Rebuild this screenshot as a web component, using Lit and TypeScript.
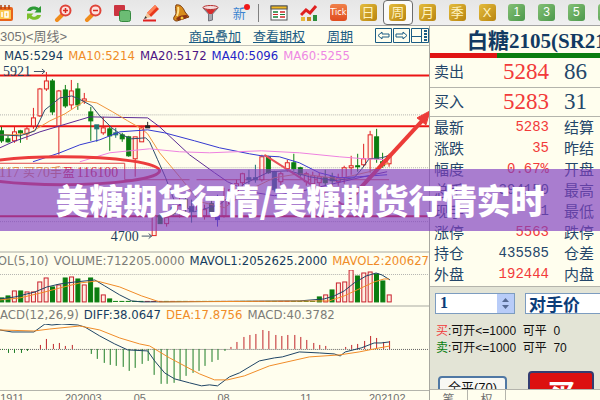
import { LitElement, html, svg, css } from "lit";
import { customElement } from "lit/decorators.js";

const PITCH = 6.37;
const xAt = (i: number) => 1.6 + PITCH * i;
const RED = "#e02020";
const GREEN = "#0a7d10";

type Candle = [number, string, number, number, number, number];

// x, kind, wick top, body top, body bottom, wick bottom
const candles: Candle[] = [
  [1.5, "g", 127, 131, 141, 143], [8, "g", 136, 139, 142, 143], [14.5, "r", 127, 132, 141, 143],
  [20.5, "g", 130, 131, 133, 143], [27, "r", 127, 129, 134, 140], [33.5, "r", 108, 118, 126, 129],
  [40, "r", 88, 89, 116, 117], [46.5, "r", 72, 81, 89, 91], [52.5, "g", 79, 81, 112, 115],
  [59, "r", 90, 91, 126, 155], [65.5, "g", 85, 90, 106, 108], [71.5, "r", 80, 91, 105, 109],
  [78, "g", 83, 89, 105, 110], [84.5, "r", 93, 99, 101, 104], [91, "g", 107, 112, 121, 141],
  [97, "t", 125, 125, 129, 142], [103.5, "r", 117, 128, 133, 135], [110, "g", 127, 129, 136, 151],
  [116, "t", 128, 133, 135, 138], [122.5, "g", 133, 135, 139, 142], [129, "g", 136, 137, 156, 157],
  [135.5, "r", 137, 137, 159, 177], [142, "r", 126, 128, 142, 142], [148, "k", 122, 126, 128, 128],
  [154.5, "r", 198, 216, 236, 236], [160.5, "g", 214, 216, 224, 224], [167, "r", 216, 218, 224, 227],
  [173.5, "g", 205, 208, 214, 216], [180, "r", 198, 206, 214, 218], [186, "g", 196, 200, 208, 214],
  [192, "t", 200, 207, 212, 223], [199, "r", 196, 202, 210, 214], [205, "r", 205, 210, 216, 220],
  [212, "g", 200, 204, 213, 216], [218, "b", 195, 216, 220, 227], [224.5, "r", 188, 200, 216, 218],
  [231, "r", 184, 190, 204, 206], [237, "r", 180, 184, 192, 196], [243, "r", 173, 174, 183, 190],
  [249.5, "t", 170, 178, 180, 186], [256, "t", 165, 178, 180, 183], [262.5, "r", 155, 157, 180, 182],
  [269, "g", 156, 157, 173, 174], [275, "t", 171, 172, 190, 192], [281.5, "r", 172, 174, 182, 187],
  [288, "r", 160, 163, 169, 172], [294.5, "g", 154, 163, 169, 171], [301, "g", 167, 168, 175, 177],
  [307, "r", 172, 174, 182, 186], [313.5, "r", 172, 176, 184, 187], [320, "r", 173, 177, 183, 190],
  [326, "g", 170, 178, 183, 186], [333, "g", 173, 177, 181, 187], [339, "r", 174, 178, 182, 186],
  [345, "r", 166, 168, 178, 184], [352, "r", 156, 166, 168, 175], [358.5, "g", 154, 166, 167, 172],
  [364.5, "r", 144, 159, 165, 167], [371, "r", 131, 135, 159, 173], [377.5, "g", 129, 137, 159, 163],
  [383.5, "g", 153, 162, 166, 168], [390, "r", 154, 156, 164, 167],
];

const fills: Record<string, string> = { g: GREEN, t: "#1f7470", b: "#2b3fc0", k: "#222222" };

const volumes: [number, string][] = [
  [4, "g"], [6, "g"], [11, "r"], [11, "g"], [10, "r"], [10, "r"], [20, "r"], [24, "r"], [15, "g"],
  [17, "r"], [24, "g"], [25, "r"], [23, "g"], [17, "r"], [24, "g"], [14, "g"], [7, "r"], [3, "g"],
  ..."gggggrrrgrggrggggrrrggrrggrrgggg".split("").map((k): [number, string] => [1, k]),
  [5, "g"], [7, "r"], [12, "g"], [19, "r"], [20, "r"], [32, "r"], [26, "g"], [29, "r"], [30, "r"],
  [28, "g"], [21, "g"], [7, "r"],
];

const macd = [
  -1, -4, -4, -4, -2, 0, 4, 10, 5, 6, 3, 4, 0, 0, -5, -10, -14, -16, -17, -18, -22, -19, -15, -12,
  -26, -35, -35, -34, -31, -27, -24, -22, -17, -13, -11, -2, 2, 7, 12, 14, 15, 19, 18, 14, 13, 14,
  14, 12, 9, 6, 4, 3, 0, 0, 2, 4, 5, 8, 13, 11, 7, 8,
];

const line = (points: string, color: string, width = 1) =>
  svg`<polyline points=${points} fill="none" stroke=${color} stroke-width=${width} stroke-linejoin="round"/>`;

const dots = (y: number, color = "#b4b4b0") =>
  svg`<line x1="0" x2="429" y1=${y} y2=${y} stroke=${color} stroke-dasharray="1 1"/>`;

const drawCandle = ([x, k, wt, bt, bb, wb]: Candle) => {
  const c = k === "r" ? RED : fills[k];
  return svg`<path d="M${x} ${wt}V${bt}M${x} ${bb}V${wb}" stroke=${c}/>
    <rect x=${x - 2} y=${bt} width="4" height=${Math.max(bb - bt, 1)} fill=${k === "r" ? "#fff4e4" : c} stroke=${c}/>`;
};

const drawVolume = ([h, k]: [number, string], i: number) => {
  if (h === 1) {
    return svg`<rect x=${xAt(i) - 3} y="301" width="5" height="1" fill=${k === "r" ? RED : GREEN}/>`;
  }
  const c = k === "r" ? "#c8202c" : GREEN;
  return svg`<rect x=${xAt(i) - 2} y=${302 - h} width="4" height=${h} fill=${k === "r" ? "#fff0e4" : c} stroke=${c}/>`;
};

const magnifier = (plus: boolean) => svg`
  <path d="M3 16L8 11" stroke="#f08c1c" stroke-width="4" stroke-linecap="round"/>
  <circle cx="11.500" cy="6.500" r="5" fill="#fbe4e0" stroke="#e04438" stroke-width="2"/>
  <path d=${plus ? "M9 6.500h5M11.500 4v5" : "M9 6.500h5"} stroke="#d8281c" stroke-width="1.500"/>`;

const icons: Record<string, unknown> = {
  calendar: svg`<rect x="1" y="3" width="16" height="14" rx="2" fill="#e8641c"/><rect x="3" y="6" width="12" height="9" fill="#fbc850"/><path d="M5 1v4M9 1v4M13 1v4" stroke="#b04010" stroke-width="1.500"/><path d="M6 8v5M9 8h3v5h-3z" stroke="#fff" fill="none" stroke-width="1.500"/>`,
  refresh: svg`<path d="M2 7C3 2 11 1.500 13.500 4L16 2v6.500h-6.500l2-2C10 5 7 5 6 7z" fill="#2c9a34"/><path d="M16 11C15 16.500 7 17 4.500 14L2 16V9.500h6.500l-2 2C8 13.500 11 13 12 11z" fill="#7cc02c"/>`,
  zoomIn: magnifier(true),
  zoomOut: magnifier(false),
  layers: svg`<rect x="1" y="1" width="11" height="11" rx="1" fill="#cc3440"/><rect x="6.500" y="6.500" width="11" height="11" rx="2" fill="#6cbc74" stroke="#368a40"/>`,
  pencil: svg`<path d="M5 9L13 1L17 5L9 13z" fill="#e8381c"/><path d="M13 1L15 3L7 11L5 9z" fill="#ff8458"/><path d="M5 9L9 13L2 15z" fill="#f3c89c"/><path d="M2 15L3.500 12L5 14z" fill="#333"/><path d="M1 16.500H14" stroke="#e02020" stroke-width="2"/>`,
  bell: svg`<path d="M4 1C8 0 11 3 13 8L17 13L5 17C2 17 1 15 2 13L4 10C4 6 3 3 4 1z" fill="#d88c1c" stroke="#7c3c10"/><path d="M6 3C7 6 6 9 5 12" stroke="#ffe08c" stroke-width="2" fill="none"/><ellipse cx="10" cy="13.500" rx="6" ry="2" fill="#8c3414" transform="rotate(-16 10 13.500)"/><circle cx="10" cy="14" r="1.500" fill="#f8cc40"/>`,
  funnel: svg`<path d="M2 4L7.500 10V17L11.500 16V10L17 4z" fill="#a8a8b0" stroke="#74747c"/><path d="M4 5H15L11 10H8z" fill="#d82c2c"/><ellipse cx="9.500" cy="3.500" rx="7.500" ry="2" fill="#f3dcdc" stroke="#b83030"/>`,
  table: svg`<rect x="1" y="2" width="16" height="14" fill="#fff" stroke="#555"/><rect x="1" y="2" width="16" height="3" fill="#f0b820" stroke="#555"/><path d="M3 8h5M3 13h5" stroke="#188038" stroke-width="1.500"/><path d="M10 8h5M10 13h5" stroke="#d02828" stroke-width="1.500"/><path d="M3 10.500h5" stroke="#d02828"/><path d="M10 10.500h5" stroke="#188038"/>`,
  trend: svg`<rect x="1" y="13" width="4" height="4" fill="#e8b83c"/><rect x="7" y="13" width="4" height="4" fill="#c88c20"/><rect x="13" y="11" width="4" height="6" fill="#2c8c3c"/><path d="M1 11L6 6L10 9L16 2" fill="none" stroke="#e02020" stroke-width="3"/>`,
};

const tools = ["calendar", "refresh", "zoomIn", "zoomOut", "layers", "pencil", "bell", "funnel"];
const periods = ["日", "周", "月", "季", "X"];
const minutes = ["1", "3", "5", "15"];

@customElement("price-chart")
export class PriceChart extends LitElement {
  static styles = css`
    :host { display: block; }
    svg { display: block; width: 100%; height: auto; }
    .mark { font: 14px "Liberation Serif", "Noto Sans CJK SC", serif; fill: #1f3f5f; }
    .note { font: 14px "Liberation Serif", "Noto Sans CJK SC", serif; fill: #e08c50; }
    .han { font-size: 12px; }
    .gain { fill: #e03040; }
  `;
  render() {
    return html`<svg viewBox="0 66 430 185" role="img" aria-label="周线">
      ${dots(115)}${dots(168)}${dots(222)}
      <path d="M0 75.500H430M0 126.500H430M0 216.500H430" stroke="#ec1414" stroke-width="2"/>
      <path d="M0 163.500H125V180H190M197 180H390" stroke="#e04848" fill="none"/>
      ${candles.map(drawCandle)}
      ${line("0,148 13,142 27,137 40,132 60,126 80,120 90,117 148,118 160,127 190,155 215,173 228,182 250,192 275,196 300,192 330,185 360,178 388,172", "#5c2c94")}
      ${line("0,135 14,135 30,133 50,121 65,114 85,101 97,103 113,112 128,121 142,129 148,134 160,153 180,177 200,202 225,208 250,190 275,178 300,174 340,179 370,172 390,163", "#f0963c")}
      ${line("0,135 20,136 35,131 45,110 60,98 72,96 83,101 92,106 100,116 112,128 122,135 132,139 146,138 150,142 158,160 166,178 175,202 195,212 220,205 245,184 270,172 290,171 310,177 335,181 355,178 362,170 370,159 382,158 390,156", "#2c4c6c")}
      ${line("33,162 60,153 80,145 100,140 120,132 148,130 165,133 195,141 220,148 250,154 262,156 280,157 300,163 320,173 340,178 360,177 388,175", "#3438d0")}
      ${line("80,162 110,153 150,149 180,152 210,153 262,151 300,153 340,157 365,159 390,160", "#ee82e0")}
      <ellipse cx="62" cy="171" rx="98" ry="14" fill="none" stroke="#ec3c3c" stroke-width="3"/>
      <path d="M265 155L345 206" stroke="#e85058" stroke-width="2"/>
      <path d="M345 206L424 120" stroke="#ec3c38" stroke-width="4"/>
      <path d="M431 111L427 125L418 118z" fill="#ec3c38" stroke="#ec3c38"/>
      <text class="mark" x="3" y="76">5921</text>
      <path d="M34 71.500H45M42 69L45 71.500L42 74" stroke="#44566a" fill="none"/>
      <text class="mark" x="111" y="241">4700</text>
      <path d="M142 236.500H152M149 234L152 236.500L149 239" stroke="#44566a" fill="none"/>
      <text class="note" y="177"><tspan x="-1">117</tspan><tspan x="23" class="han">买</tspan><tspan x="36">70</tspan><tspan x="50" class="han">手</tspan><tspan x="63" class="han gain">盈</tspan><tspan x="77" class="gain">116100</tspan></text>
    </svg>`;
  }
}

@customElement("volume-chart")
export class VolumeChart extends LitElement {
  static styles = css`
    :host { display: block; }
    svg { display: block; width: 100%; height: auto; }
  `;
  render() {
    return html`<svg viewBox="0 270 430 36" role="img" aria-label="VOL">
      ${dots(274.5)}
      ${volumes.map(drawVolume)}
      ${line("0,299 15,297 35,292 47,287 60,284 75,282 95,280 105,286 120,295 132,301 142,302 300,301 325,299 335,296 345,291 355,283 367,276 377,273 383,275 391,280", "#1f4464")}
      ${line("0,300 20,298 45,292 60,288 80,283 97,281 120,287 142,296 160,302 330,301 345,296 360,289 375,282 385,279 390,279", "#f08c28")}
    </svg>`;
  }
}

@customElement("macd-chart")
export class MacdChart extends LitElement {
  static styles = css`
    :host { display: block; }
    svg { display: block; width: 100%; height: auto; }
  `;
  render() {
    return html`<svg viewBox="0 325 430 64" role="img" aria-label="MACD">
      ${dots(350.5, "#606060")}
      ${macd.map((v, i) => svg`<path d="M${Math.round(xAt(i)) + 0.5} 350V${350 - v}" stroke=${v > 0 ? "#c02428" : "#1c7c24"}/>`)}
      ${line("0,331 12,333 34,333 45,325 52,326 62,325 78,326 85,328 100,337 115,345 128,351 148,352 155,362 165,374 175,380 190,384 202,387 210,386 218,387 230,378 240,374 260,362 275,359 283,358 300,353 320,354 335,355 341,357 346,353 362,349 375,344 382,344 390,343", "#1f4464")}
      ${line("0,331 34,332 50,330 80,327 100,331 120,339 140,345 150,347 170,359 200,375 215,381 228,381 245,377 270,367 310,358 340,356 360,353 380,349 391,347", "#f08c28")}
    </svg>`;
  }
}

@customElement("tool-bar")
export class ToolBar extends LitElement {
  static styles = css`
    :host { display: block; overflow: hidden; height: 25px; flex: none; background: linear-gradient(#e6e6e6, #f0f0f0); border-bottom: 1px solid #a4a4a4; }
    .bar { display: grid; grid-template-columns: 264fr 367fr; height: 25px; margin: 0 -21px 0 -10px; }
    .group { display: grid; grid-auto-flow: column; grid-auto-columns: 1fr; }
    .second { margin-left: 4px; padding-left: 6px; background: linear-gradient(#808080, #808080) 0 4px / 1px 18px no-repeat; }
    button { display: flex; align-items: center; justify-content: center; min-width: 0; margin: 0; padding: 0; border: 0; background: none; font-family: "Liberation Sans", "Noto Sans CJK SC", sans-serif; }
    svg { width: 18px; height: 18px; flex: none; }
    .new { position: relative; color: #3c84d0; font-size: 13px; }
    .new::after { content: ""; position: absolute; top: 4px; right: 4px; width: 6px; height: 6px; border-radius: 50%; background: #f01818; }
    .tile { display: block; width: 17px; border-radius: 3px; line-height: 17px; text-align: center; font-size: 13px; color: #fff3c0; background: linear-gradient(135deg, #e4bc3c, #b88410); }
    .tick { color: #fff; font-family: "DejaVu Sans Condensed", "DejaVu Sans", sans-serif; font-stretch: condensed; font-size: 9px; background: linear-gradient(#f08048, #e04c20); }
    .green { color: #fff; font-size: 12px; background: linear-gradient(135deg, #84c074, #4c984c); }
    .on { border: 1px solid #6c6c6c; border-radius: 4px; background: #fafafa; }
  `;
  render() {
    return html`<div class="bar">
      <div class="group">
        ${tools.map((t) => html`<button aria-label=${t}><svg viewBox="0 0 18 18">${icons[t]}</svg></button>`)}
        <button class="new">新</button>
      </div>
      <div class="group second">
        ${["table", "trend"].map((t) => html`<button aria-label=${t}><svg viewBox="0 0 18 18">${icons[t]}</svg></button>`)}
        <button><span class="tile tick">Tick</span></button>
        ${periods.map((p) => html`<button class=${p === "周" ? "on" : ""}><span class="tile">${p}</span></button>`)}
        ${minutes.map((m) => html`<button><span class="tile green">${m}</span></button>`)}
      </div>
    </div>`;
  }
}

const stats = [
  ["最新", "5283", "结算", "up"],
  ["涨跌", "35", "昨结", "up"],
  ["幅度", "0.67%", "开盘", "up"],
  ["总手", "394150", "最高", ""],
  ["现手", "1", "最低", ""],
  ["涨停", "5563", "跌停", "up"],
  ["持仓", "435585", "仓差", ""],
  ["外盘", "192444", "内盘", "up"],
];

@customElement("quote-panel")
export class QuotePanel extends LitElement {
  static styles = css`
    :host { display: flex; flex-direction: column; min-width: 0; min-height: 0; overflow: hidden; border-left: 1px solid #a8a8a0; color: #24466a; font-family: "Liberation Sans", "Noto Sans CJK SC", sans-serif; }
    h2 { margin: 0; height: 27px; padding-left: 37px; font: bold 21px/30px "Liberation Serif", "Noto Sans CJK SC", serif; color: #123a62; white-space: nowrap; }
    .ratio { display: grid; grid-template-columns: 67fr 102fr; height: 5px; flex: none; background: #0a7d10; }
    .ratio span { background: #e01414; }
    table { width: 100%; table-layout: fixed; border-collapse: collapse; font-size: 15px; }
    th, td { padding: 0; font-weight: normal; text-align: left; white-space: nowrap; }
    th:first-child { width: 50px; padding-left: 4px; box-sizing: border-box; }
    td.value { width: 69px; text-align: right; }
    .next { padding-left: 15px; }
    .book tr { height: 29px; border-bottom: 1px solid #b4b4ac; }
    .book td { font: 23px/28px "Liberation Serif", serif; }
    .book th { line-height: 28px; }
    .stats { margin-bottom: 1px; }
    .stats th { line-height: 21px; }
    .stats td.value { font: 14px/21px "Liberation Mono", monospace; }
    td.up { color: #f23a3a; }
    .order { flex: 1; min-height: 0; overflow: hidden; border-top: 1px solid #b4b4ac; background: #e3e4d6; }
    .fields { display: flex; gap: 10px; padding: 6px 0 0 5px; }
    .amount { display: flex; width: 80px; height: 21px; box-sizing: border-box; border: 1px solid #7c9cc0; background: #fff; flex: none; }
    .amount input { flex: 1; min-width: 0; border: 0; padding: 0 4px; background: none; font: bold 16px "Liberation Serif", serif; color: #0c3c78; }
    .amount button { width: 17px; padding: 0; border: 0; background: #b8ccf8; }
    .amount svg { display: block; margin: auto; width: 9px; height: 13px; }
    select { appearance: none; width: 90px; height: 21px; flex: none; border: 1px solid #7c9cc0; border-radius: 0; padding: 0 3px; background: #fff; color: #0c3c78; font: bold 17px/19px "Noto Sans CJK SC", sans-serif; }
    .room { margin: 0; padding: 9px 0 0 6px; font-size: 12px; line-height: 17px; color: #101010; white-space: pre; }
    .room b { font-weight: normal; color: #f23a3a; }
    .room .sell { color: #0a7d10; }
    .actions { display: flex; align-items: flex-start; gap: 21px; padding: 14px 0 0 8px; }
    .flat { width: 69px; height: 24px; margin-top: 5px; padding: 0; flex: none; border: 2px solid #5078a4; border-radius: 4px; background: #f8f8f4; font: 13px/14px "Liberation Sans", "Noto Sans CJK SC", sans-serif; color: #101010; }
    .buy { width: 66px; height: 44px; padding: 0; flex: none; border: 2px solid #343c70; border-radius: 4px; background: #dc1010; color: #fff; font: bold 28px/40px "Noto Sans CJK SC", sans-serif; }
    .tabs { display: flex; height: 10px; flex: none; overflow: hidden; border-top: 1px solid #b4b4ac; }
    .tabs button { width: 38px; height: 18px; padding: 0; border: 0; border-right: 1px solid #b4b4ac; background: none; color: #707070; font: 12px/14px "Noto Sans CJK SC", sans-serif; }
  `;
  render() {
    return html`
      <h2>白糖2105(SR2105)</h2>
      <div class="ratio"><span></span></div>
      <table class="book">
        <tr><th scope="row">卖出</th><td class="value up">5284</td><td class="next">86</td></tr>
        <tr><th scope="row">买入</th><td class="value up">5283</td><td class="next">31</td></tr>
      </table>
      <table class="stats">
        ${stats.map(([a, v, b, k]) => html`<tr><th scope="row">${a}</th><td class="value ${k}">${v}</td><th class="next">${b}</th></tr>`)}
      </table>
      <div class="order">
        <div class="fields">
          <div class="amount">
            <input aria-label="手数" value="1" />
            <button aria-label="调整手数"><svg viewBox="0 0 9 13"><path d="M1 5L4.500 1L8 5zM1 8L4.500 12L8 8z" fill="#566a94"/></svg></button>
          </div>
          <select aria-label="价格"><option>对手价</option></select>
        </div>
        <p class="room"><b>买</b>:可开&lt;=1000  可平  0
<b class="sell">卖</b>:可开&lt;=1000  可平  70</p>
        <div class="actions"><button class="flat">全平(70)</button><button class="buy">买</button></div>
      </div>
      <div class="tabs"><button>笔</button><button>权</button></div>
    `;
  }
}

@customElement("app-root")
export class AppRoot extends LitElement {
  static styles = css`
    :host { position: relative; display: flex; flex-direction: column; height: 100vh; overflow: hidden; background: #fffeee; font-family: "Liberation Sans", "Noto Sans CJK SC", sans-serif; }
    .main { flex: 1; min-height: 0; display: grid; grid-template-columns: 429fr 171fr; grid-template-rows: minmax(0, 1fr); }
    .charts { display: flex; flex-direction: column; min-width: 0; overflow: hidden; }
    .head { display: flex; align-items: center; height: 19px; flex: none; border-bottom: 1px solid #c0c0b8; font-size: 13px; color: #747474; white-space: nowrap; }
    .head nav { display: flex; gap: 12px; margin-left: auto; }
    .head a { color: #1b5c84; }
    .head a:last-child { margin-left: 10px; }
    .moves { display: flex; margin-left: 22px; }
    .moves button { padding: 0; border: 0; background: none; }
    .moves svg { display: block; width: 18px; height: 15px; }
    .legend { display: flex; height: 20px; flex: none; padding-left: 4px; gap: 5px; font: 13px/20px "DejaVu Sans Condensed", "DejaVu Sans", sans-serif; font-stretch: condensed; white-space: nowrap; }
    .sub { height: 17px; padding: 0; line-height: 16px; border-top: 2px solid #d4d4c8; }
    .gray { color: #7c7c78; }
    .navy { color: #163c60; }
    .orange { color: #f08c28; }
    .purple { color: #4c1484; }
    .blue { color: #2424c8; }
    .pink { color: #ee88e4; }
    .cut { margin-left: -10px; }
    .axis { display: block; width: 100%; height: auto; margin-top: auto; border-top: 1px solid #b4b4ac; }
    .axis text { font: 11px "Liberation Sans", sans-serif; fill: #707070; }
    .banner { position: absolute; left: 0; right: 0; top: 50%; height: 62px; margin: -31px 0 0; background: rgba(128, 64, 192, 0.68); color: #fff; font: 900 34px/62px "Noto Sans CJK SC", sans-serif; text-align: center; white-space: nowrap; }
  `;
  render() {
    return html`
      <tool-bar></tool-bar>
      <div class="main">
        <section class="charts">
          <div class="head">
            <span>305)&lt;周线&gt;</span>
            <nav><a href="#overlay">商品叠加</a><a href="#options">查看期权</a><a href="#period">周期</a></nav>
            <div class="moves">
              <button aria-label="后退"><svg viewBox="0 0 18 15"><path d="M.5 .5H16.500V14.500H.5zM3 7.500L7 4V6H14V9H7V11z" fill="none" stroke="#1b5c84"/></svg></button>
              <button aria-label="前进"><svg viewBox="0 0 18 15"><path d="M.5 .5H16.500V14.500H.5zM14 7.500L10 4V6H3V9H10V11z" fill="none" stroke="#1b5c84"/></svg></button>
              <button aria-label="布局"><svg viewBox="0 0 18 15"><path d="M.5 .5H17.500V14.500H.5zM.5 8.500H10M10.500 .5V14" fill="none" stroke="#1b5c84"/><path d="M14.500 2V13" stroke="#1b5c84" stroke-width="3" stroke-dasharray="2 1"/></svg></button>
            </div>
          </div>
          <div class="legend">
            <span class="navy">MA5:5294</span><span class="orange">MA10:5214</span><span class="purple">MA20:5172</span><span class="blue">MA40:5096</span><span class="pink">MA60:5255</span>
          </div>
          <price-chart></price-chart>
          <div class="legend sub">
            <span class="gray cut">VOL(5,10)</span><span class="gray">VOLUME:712205.0000</span><span class="navy">MAVOL1:2052625.2000</span><span class="orange">MAVOL2:2006277.3000</span>
          </div>
          <volume-chart></volume-chart>
          <div class="legend sub">
            <span class="gray cut">MACD(12,26,9)</span><span class="navy">DIFF:38.0647</span><span class="orange">DEA:17.8756</span><span class="gray">MACD:40.3782</span>
          </div>
          <macd-chart></macd-chart>
          <svg class="axis" viewBox="0 391 430 9">
            <text x="0" y="402">1911</text><text x="65" y="402">202003</text><text x="134" y="402">05</text><text x="218" y="402">08</text><text x="301" y="402">11</text><text x="370" y="402">202102</text>
          </svg>
        </section>
        <quote-panel></quote-panel>
      </div>
      <h1 class="banner">美糖期货行情/美糖期货行情实时</h1>
    `;
  }
}
